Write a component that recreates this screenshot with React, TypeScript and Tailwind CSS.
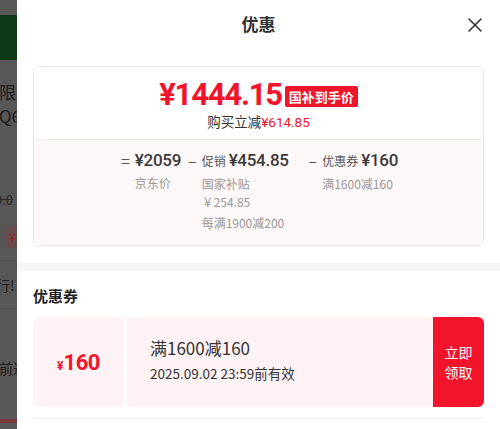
import React from "react";

const RED = "#f2142b";

function LeftStrip() {
  return (
    <div className="w-[17px] h-full shrink-0 overflow-hidden bg-[#575757] flex flex-col">
      <div className="w-[60px] flex flex-col text-[#1e1e1e]">
        <div className="h-[15px]" />
        <div className="h-[45px] bg-[#0d3a17]" />
        <div className="h-[20px]" />
        <div className="text-[17px] leading-[24px] ml-[-1px] whitespace-nowrap">限木</div>
        <div className="text-[17px] leading-[24px] ml-[-1px] whitespace-nowrap">Q6</div>
        <div className="h-[64px]" />
        <div className="text-[13px] leading-[16px] ml-[-5px] line-through text-[#2a2a2a] whitespace-nowrap">9.0</div>
        <div className="h-[18px]" />
        <div className="h-[22px] ml-[6px] w-[30px] rounded-[3px] bg-[#6b4c4c] text-[#8a2a2a] text-[12px] leading-[22px] pl-[3px]">¥</div>
        <div className="h-[8px]" />
        <div className="h-px bg-[#606060]" />
        <div className="h-[19px]" />
        <div className="text-[14px] leading-[18px] ml-[-4px] whitespace-nowrap">行!</div>
        <div className="h-[10px]" />
        <div className="h-px bg-[#606060]" />
        <div className="h-[54px]" />
        <div className="text-[14px] leading-[18px] ml-[-1px] whitespace-nowrap">前进</div>
        <div className="h-[42px]" />
        <div className="h-[4px] bg-[#7a3a3a]" />
      </div>
    </div>
  );
}

function Col({
  sign,
  label,
  value,
  subs,
}: {
  sign: string;
  label?: string;
  value: string;
  subs: { text: string; mt: string }[];
}) {
  return (
    <div className="flex items-start">
      <span className="text-[16px] leading-[22px] text-[#555] mr-[5px]">{sign}</span>
      <div className="flex flex-col">
        <div className="flex items-baseline leading-[22px] whitespace-nowrap">
          {label && <span className="text-[12px] text-[#555] mr-[3px]">{label}</span>}
          <span className="text-[17px] font-medium text-[#3a3a3a] font-['Roboto','Noto_Sans_CJK_SC',sans-serif] tracking-[-0.3px]">
            {value}
          </span>
        </div>
        {subs.map((s, i) => (
          <div key={i} className={`text-[12px] leading-[17px] text-[#999] whitespace-nowrap ${s.mt}`}>
            {s.text}
          </div>
        ))}
      </div>
    </div>
  );
}

export default function App() {
  return (
    <div className="w-[500px] h-[429px] overflow-hidden flex bg-white font-['Noto_Sans_CJK_SC','Noto_Sans',sans-serif]">
      <LeftStrip />
      <div className="flex-1 flex flex-col bg-white min-w-0">
        {/* header */}
        <div className="relative h-[50px] flex items-center justify-center">
          <span className="text-[17px] font-bold text-[#333] mt-[-2px]">优惠</span>
          <button className="absolute right-[16px] top-[16px] w-[18px] h-[18px] flex items-center justify-center">
            <svg width="16" height="16" viewBox="0 0 16 16">
              <path d="M2 2 L14 14 M14 2 L2 14" stroke="#333" strokeWidth="1.6" strokeLinecap="round" />
            </svg>
          </button>
        </div>

        {/* summary card */}
        <div className="mx-4 mt-[16px] rounded-[6px] border border-[#eee2e4] overflow-hidden">
          <div className="h-[72px] flex flex-col items-center pt-[11px] bg-white">
            <div className="flex items-center h-[34px]">
              <span
                className="text-[31px] leading-[34px] font-bold font-['Roboto',sans-serif] tracking-[-1.2px]"
                style={{ color: RED }}
              >
                ¥1444.15
              </span>
              <span
                className="ml-[3px] mt-[2px] h-[21px] px-[4px] rounded-[2px] text-white text-[13px] leading-[21px] font-bold"
                style={{ backgroundColor: RED }}
              >
                国补到手价
              </span>
            </div>
            <div className="text-[13.5px] leading-[20px] text-[#333] mt-[-1px]">
              购买立减
              <span className="font-['Roboto',sans-serif]" style={{ color: RED }}>
                ¥614.85
              </span>
            </div>
          </div>
          <div className="h-[106px] bg-[#fff8f8] border-t border-[#f6ecee] flex justify-center pt-[9px] pl-[2px]">
            <Col sign="=" value="¥2059" subs={[{ text: "京东价", mt: "mt-[3px]" }]} />
            <div className="w-[7px]" />
            <Col
              sign="–"
              label="促销"
              value="¥454.85"
              subs={[
                { text: "国家补贴", mt: "mt-[3px]" },
                { text: "￥254.85", mt: "mt-[1px]" },
                { text: "每满1900减200", mt: "mt-[4px]" },
              ]}
            />
            <div className="w-[20px]" />
            <Col sign="–" label="优惠券" value="¥160" subs={[{ text: "满1600减160", mt: "mt-[3px]" }]} />
          </div>
        </div>

        <div className="mt-[17px] h-[8px] bg-[#f5f6f8]" />

        {/* coupons */}
        <div className="px-4">
          <div className="h-[38px] flex items-center">
            <span className="text-[15px] font-bold text-[#222] mt-[13px]">优惠券</span>
          </div>
          <div className="mt-[8px] h-[90px] flex">
            <div className="w-[91px] rounded-l-[8px] bg-[#fff3f5] flex items-center justify-center">
              <span className="font-bold font-['Roboto',sans-serif] flex items-baseline" style={{ color: RED }}>
                <span className="text-[12px]">¥</span>
                <span className="text-[22px] tracking-[-0.5px]">160</span>
              </span>
            </div>
            <div className="relative w-[3px] bg-white">
              <div className="absolute left-[-2px] top-[-4px] w-[7px] h-[7px] rounded-full bg-white" />
              <div className="absolute left-[-2px] bottom-[-4px] w-[7px] h-[7px] rounded-full bg-white" />
            </div>
            <div className="flex-1 bg-[#fff3f5] flex flex-col justify-center pl-[23px]">
              <div className="text-[17px] leading-[22px] text-[#333] mt-[-4px]">满1600减160</div>
              <div className="text-[13.5px] leading-[20px] text-[#333] mt-[4px]">2025.09.02 23:59前有效</div>
            </div>
            <div
              className="w-[51px] rounded-r-[6px] flex flex-col items-center justify-center text-white text-[14px] leading-[20px]"
              style={{ backgroundColor: RED }}
            >
              <span>立即</span>
              <span>领取</span>
            </div>
          </div>
          <div className="mt-[11px] h-px bg-[#f0f0f0]" />
        </div>
      </div>
    </div>
  );
}
